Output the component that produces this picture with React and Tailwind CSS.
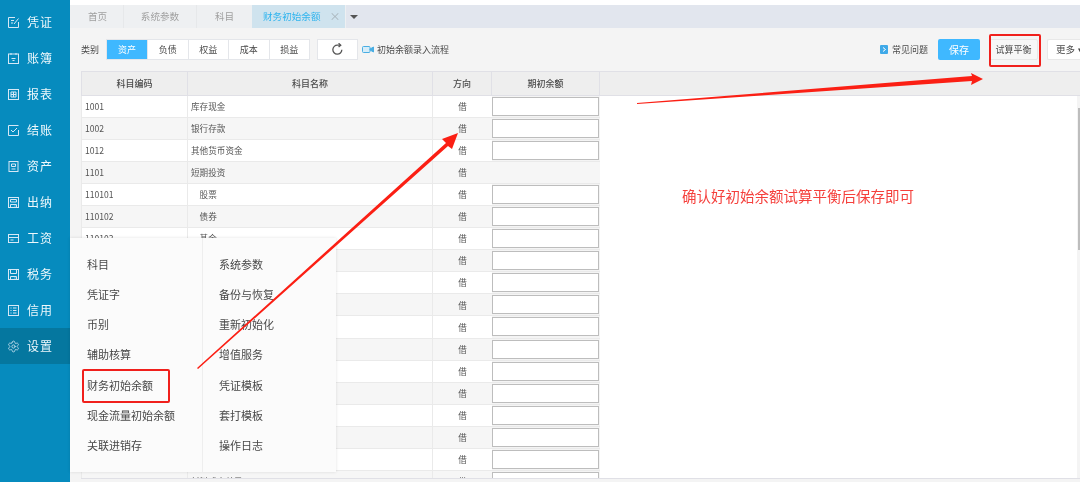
import React from "react";
import { Settings } from "lucide-react";

const stroke = "#d6e8f6";

function Box({ children }) {
  return (
    <svg width="13" height="13" viewBox="0 0 13 13" fill="none" stroke={stroke} strokeWidth="1" className="shrink-0">
      {children}
    </svg>
  );
}

const icons = {
  voucher: <Box><path d="M8 1.5H1.5v10h10V6" /><path d="M4 4.5h3M4 7h2M7 8l4.5-5.5" /></Box>,
  book: <Box><rect x="1.5" y="2" width="10" height="9.5" /><path d="M4 1v2M9 1v2M4.5 6.5h4M5.5 8.5h2" /></Box>,
  report: <Box><rect x="1.5" y="1.5" width="10" height="10" /><path d="M4 4h5v5H4zM6.5 4v5M4 6.5h5" /></Box>,
  close: <Box><path d="M11.5 6v5.5h-10v-10h10" /><path d="M4 6l2 2 4-4" /></Box>,
  asset: <Box><rect x="2" y="1.5" width="9" height="10" /><path d="M4.5 4h4v2.5h-4zM4.5 9h4" /></Box>,
  cash: <Box><rect x="1.5" y="1.5" width="10" height="10" /><path d="M3.5 3.5h6v2.5h-6zM3.5 8.5h6v3h-6zM8 9.5v1" /></Box>,
  pay: <Box><rect x="1.5" y="2.5" width="10" height="8" /><path d="M1.5 5.5h10M3.5 8h3" /></Box>,
  tax: <Box><rect x="1.5" y="1.5" width="10" height="10" /><path d="M3.5 1.5v4h6v-4M3.5 8.5h6v3h-6zM8 9.5v1" /></Box>,
  credit: <Box><rect x="1.5" y="1.5" width="10" height="10" /><path d="M3.5 4h1M6 4h3.5M3.5 6.5h1M6 6.5h3.5M3.5 9h1M6 9h3.5" /></Box>,
  gear: <Settings size={13} strokeWidth={1.4} color={stroke} className="shrink-0" />,
};

const nav = [
  ["凭证", "voucher"], ["账簿", "book"], ["报表", "report"], ["结账", "close"], ["资产", "asset"],
  ["出纳", "cash"], ["工资", "pay"], ["税务", "tax"], ["信用", "credit"], ["设置", "gear"],
];

const rows = [
  ["1001", "库存现金"], ["1002", "银行存款"], ["1012", "其他货币资金"], ["1101", "短期投资", true],
  ["110101", "　股票"], ["110102", "　债券"], ["110103", "　基金"], ["110110", "　其他"],
  ["1121", "应收票据"], ["1122", "应收账款"], ["1123", "预付账款"], ["1131", "应收股利"],
  ["1132", "应收利息"], ["1221", "其他应收款"], ["1401", "材料采购"], ["1402", "在途物资"],
  ["1403", "原材料"], ["1404", "材料成本差异"],
];

const menuLeft = ["科目", "凭证字", "币别", "辅助核算", "财务初始余额", "现金流量初始余额", "关联进销存"];
const menuRight = ["系统参数", "备份与恢复", "重新初始化", "增值服务", "凭证模板", "套打模板", "操作日志"];

export default function App() {
  return (
    <div className="relative flex h-[482px] w-[1080px] overflow-hidden bg-white blur-[0.3px] font-['Noto_Sans_CJK_SC','Liberation_Sans',sans-serif]">
      <aside className="w-[70px] shrink-0 bg-[#068bbe] pt-1">
        {nav.map(([label, icon]) => (
          <div key={label} className={`flex h-9 items-center gap-[7px] pl-[7px] text-[12px] tracking-[1px] text-[#eef8fc] ${label === "设置" ? "bg-[#05779f]" : ""}`}>
            {icons[icon]}
            <span>{label}</span>
          </div>
        ))}
      </aside>

      <main className="flex min-w-0 flex-1 flex-col">
        <div className="mt-[5px] flex h-[23px] shrink-0 items-stretch bg-[#e2e6ee] text-[9.6px] text-[#a0a0a0]">
          <div className="flex w-[54px] items-center justify-center border-r border-[#e6e8ea] bg-[#eef0f2] pl-[2px]">首页</div>
          <div className="flex w-[73px] items-center justify-center border-r border-[#e6e8ea] bg-[#eef0f2]">系统参数</div>
          <div className="flex w-[55px] items-center justify-center bg-[#eef0f2]">科目</div>
          <div className="flex w-[93px] items-center gap-[9px] bg-[#cfe3ee] pl-[11px] text-[#30b4ee]">
            财务初始余额
            <span className="text-[11px] leading-none text-[#a8b4bb]">×</span>
          </div>
          <div className="flex w-[17px] items-center justify-center border-l border-[#eef0f2]">
            <span className="h-0 w-0 border-x-[4px] border-t-[4px] border-x-transparent border-t-[#555]" />
          </div>
        </div>

        <div className="flex h-[43px] shrink-0 items-center bg-[#f4f4f4] pl-[11px] text-[9px] text-[#4a4a4a]">
          <span className="mr-[7px]">类别</span>
          <div className="flex h-[21px] border border-[#e4e6ea] bg-white">
            <div className="flex w-[40px] items-center justify-center bg-[#3fb8ff] text-white">资产</div>
            {["负债", "权益", "成本", "损益"].map((t) => (
              <div key={t} className="flex w-[40.5px] items-center justify-center border-l border-[#e4e6ea]">{t}</div>
            ))}
          </div>
          <div className="ml-[7px] flex h-[21px] w-[41px] items-center justify-center border border-[#e4e6ea] bg-white">
            <svg width="13" height="13" viewBox="0 0 24 24" fill="none" stroke="#555" strokeWidth="2.4">
              <path d="M20 12.5A8.3 8.3 0 1 1 12 4h5" />
              <path d="M14 0.5l4 3.5-4 3.5" />
            </svg>
          </div>
          <svg width="12" height="9" viewBox="0 0 12 9" className="ml-[4px] mr-[3px]" fill="none" stroke="#49aee3">
            <rect x="0.5" y="1.5" width="7.5" height="6" rx="1" fill="#d6edf9" />
            <path d="M8 4l3.5-2v5L8 5z" fill="#49aee3" />
          </svg>
          <span>初始余额录入流程</span>

          <div className="ml-auto flex items-center">
            <svg width="9" height="10" viewBox="0 0 9 10" className="mr-[3px]">
              <rect width="8" height="9" rx="1" fill="#3fa9e8" />
              <path d="M3 2.5l2.5 2L3 6.5" fill="none" stroke="#fff" />
            </svg>
            <span>常见问题</span>
            <div className="ml-[10px] flex h-[21px] w-[42px] items-center justify-center rounded-[2px] bg-[#3fb8ff] text-[10px] text-white">保存</div>
            <div className="ml-[9px] flex h-[21px] w-[49px] items-center justify-center rounded-[2px] border border-[#e8e8e8] bg-[#f7f7f7]">试算平衡</div>
            <div className="ml-[9px] flex h-[21px] w-[33px] items-center justify-start overflow-hidden whitespace-nowrap rounded-l-[2px] border border-r-0 border-[#e8e8e8] bg-white pl-[8px] text-[9.5px]">更多<span className="ml-[3px] text-[7px]">▾</span></div>
          </div>
        </div>

        <div className="flex min-h-0 flex-1 flex-col bg-[#f4f4f4] pb-[3px] pl-[11px]">
          <div className="flex h-[25px] shrink-0 border-y border-[#e0e0e6] bg-[#eeeeee] text-[9px] font-medium text-[#4a4a4a]">
            <div className="flex w-[107px] items-center justify-center border-l border-r border-[#e0e0e6]">科目编码</div>
            <div className="flex w-[245px] items-center justify-center border-r border-[#e0e0e6]">科目名称</div>
            <div className="flex w-[59px] items-center justify-center border-r border-[#e0e0e6]">方向</div>
            <div className="flex w-[108px] items-center justify-center border-r border-[#e0e0e6]">期初余额</div>
          </div>
          <div className="relative min-h-0 flex-1 overflow-hidden border-b border-[#e0e0e6] bg-white">
            {rows.map(([code, name, noInput], i) => (
              <div key={code} className={`flex h-[22.05px] w-[519px] border-b border-[#eaeaea] text-[8.6px] text-[#555] ${i % 2 ? "bg-[#f6f6f6]" : "bg-white"}`}>
                <div className="flex w-[107px] items-center border-x border-[#eaeaea] pl-[3px]">{code}</div>
                <div className="flex w-[245px] items-center border-r border-[#eaeaea] pl-[3px]">{name}</div>
                <div className="flex w-[59px] items-center justify-center">借</div>
                <div className={`w-[108px] pl-0 ${noInput ? "bg-[#f6f6f6]" : "bg-[#f4f4f4]"}`}>
                  {!noInput && <div className="mt-[1px] h-[19px] w-[107px] border border-[#bdbdbd] bg-white" />}
                </div>
              </div>
            ))}
            <div className="absolute bottom-0 right-0 top-0 w-[3px] bg-[#f4f4f4]">
              <div className="ml-[1px] mt-[12px] h-[142px] w-[2px] bg-[#bdbdbd]" />
            </div>
          </div>
        </div>
      </main>

      <div className="absolute left-[70px] top-[238px] flex h-[234px] w-[266px] bg-[#fbfbfb] text-[11px] text-[#484848] shadow-[0_0_3px_rgba(0,0,0,0.12)]">
        <div className="w-[133px] border-r border-[#eeeeee] pl-[17px] pt-[11px]">
          {menuLeft.map((t) => (
            <div key={t} className="flex h-[30.2px] items-center">{t}</div>
          ))}
        </div>
        <div className="flex-1 pl-[16px] pt-[11px]">
          {menuRight.map((t) => (
            <div key={t} className="flex h-[30.2px] items-center">{t}</div>
          ))}
        </div>
      </div>

      <div className="absolute left-[989px] top-[34px] h-[33px] w-[52px] rounded-[2px] border-2 border-[#f0201c]" />
      <div className="absolute left-[82px] top-[369px] h-[34px] w-[88px] rounded-[2px] border-2 border-[#f0201c]" />

      <svg className="absolute left-0 top-0" width="1080" height="482" viewBox="0 0 1080 482">
        <polygon points="197,368 446,143 442,139 458,133 452,149 448,146 198,369" fill="#fb1f14" />
        <polygon points="637,103 972,76 971,73 983,79 971,85 972,81 637,104" fill="#fb1f14" />
      </svg>

      <div className="absolute left-[682px] top-[186px] text-[14.5px] leading-5 text-[#f5403c]">确认好初始余额试算平衡后保存即可</div>
    </div>
  );
}
